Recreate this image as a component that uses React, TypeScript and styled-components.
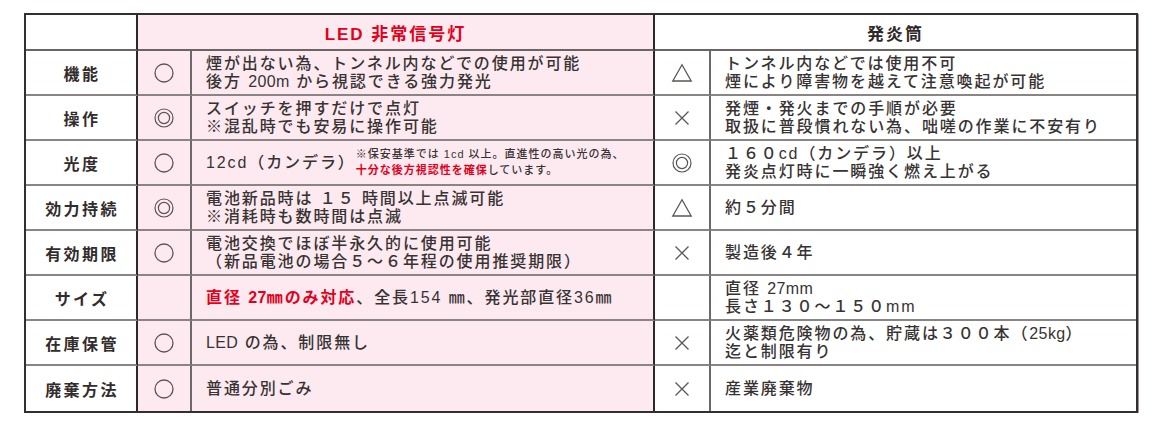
import React from "react";
import styled, { createGlobalStyle } from "styled-components";

const Global = createGlobalStyle`
  html, body { margin: 0; padding: 0; background: #ffffff; }
  body { font-family: "Liberation Sans", "Noto Sans CJK JP", sans-serif; color: #363131; }
`;

const Page = styled.div`
  padding: 13px 0 0 24px;
`;

const Table = styled.div`
  box-sizing: border-box;
  width: 1114px;
  display: grid;
  grid-template-columns: 112px 54px 463px 56px 425px;
  grid-template-rows: 36px repeat(8, 45px);
  border: 2px solid #352e2e;
  box-shadow: 1px 1px 0 #9a9494;
`;

const Cell = styled.div<{ $pink?: boolean; $right?: "dark" | "mid" | "none"; $last?: boolean; $span?: number }>`
  box-sizing: border-box;
  display: flex;
  align-items: center;
  min-width: 0;
  background: ${(p) => (p.$pink ? "#fde9f0" : "#ffffff")};
  border-right: ${(p) =>
    p.$right === "dark" ? "2px solid #2f2828" : p.$right === "mid" ? "2px solid #6e6868" : "none"};
  border-bottom: ${(p) => (p.$last ? "none" : "2px solid #8a8484")};
  grid-column: ${(p) => (p.$span ? `span ${p.$span}` : "auto")};
`;

const HeaderCell = styled(Cell)<{ $red?: boolean }>`
  justify-content: center;
  border-bottom: 2px solid #6a6464;
  font-size: 17px;
  font-weight: 700;
  letter-spacing: 2px;
  color: ${(p) => (p.$red ? "#e3001b" : "#2e2828")};
`;

const LabelCell = styled(Cell)`
  justify-content: center;
  font-size: 16px;
  font-weight: 700;
  letter-spacing: 2.4px;
  color: #322c2c;
  padding-left: 2px;
`;

const MarkCell = styled(Cell)`
  justify-content: center;
`;

const TextCell = styled(Cell)`
  padding-left: 14px;
  font-size: 16px;
  line-height: 18px;
  letter-spacing: 1.9px;
  font-weight: 500;
  color: #383333;
  white-space: nowrap;
`;

const Lines = styled.div`
  display: flex;
  flex-direction: column;
`;

const Red = styled.span`
  color: #e3001b;
  font-weight: 700;
`;

const Latin = styled.span`
  letter-spacing: 0.4px;
`;

const Note = styled.div`
  font-size: 11px;
  line-height: 16px;
  letter-spacing: 1px;
  padding-left: 12px;
  text-indent: -12px;
  margin-left: 0;
  margin-top: -2px;
  white-space: nowrap;
`;

const Inline = styled.div`
  display: flex;
  align-items: center;
`;

type Mark = "circle" | "double" | "triangle" | "cross" | "";

const MarkIcon: React.FC<{ kind: Mark }> = ({ kind }) => {
  if (!kind) return null;
  const stroke = "#5a5555";
  return (
    <svg width="22" height="22" viewBox="0 0 22 22" fill="none">
      {kind === "circle" && <circle cx="11" cy="11" r="9" stroke={stroke} strokeWidth="1.3" />}
      {kind === "double" && (
        <>
          <circle cx="11" cy="11" r="9" stroke={stroke} strokeWidth="1.2" />
          <circle cx="11" cy="11" r="5.6" stroke={stroke} strokeWidth="1.2" />
        </>
      )}
      {kind === "triangle" && (
        <path d="M11 2.8 L20.2 19 L1.8 19 Z" stroke={stroke} strokeWidth="1.3" strokeLinejoin="miter" />
      )}
      {kind === "cross" && (
        <path d="M4.5 4.5 L17.5 17.5 M17.5 4.5 L4.5 17.5" stroke={stroke} strokeWidth="1.3" />
      )}
    </svg>
  );
};

type Row = {
  label: string;
  ledMark: Mark;
  led: React.ReactNode;
  fireMark: Mark;
  fire: React.ReactNode;
};

const two = (a: React.ReactNode, b: React.ReactNode) => (
  <Lines>
    <span>{a}</span>
    <span>{b}</span>
  </Lines>
);

const rows: Row[] = [
  {
    label: "機能",
    ledMark: "circle",
    led: two(
      "煙が出ない為、トンネル内などでの使用が可能",
      <>
        後方 <Latin>200m</Latin> から視認できる強力発光
      </>
    ),
    fireMark: "triangle",
    fire: two("トンネル内などでは使用不可", "煙により障害物を越えて注意喚起が可能"),
  },
  {
    label: "操作",
    ledMark: "double",
    led: two("スイッチを押すだけで点灯", "※混乱時でも安易に操作可能"),
    fireMark: "cross",
    fire: two("発煙・発火までの手順が必要", "取扱に普段慣れない為、咄嗟の作業に不安有り"),
  },
  {
    label: "光度",
    ledMark: "circle",
    led: (
      <Inline>
        <span>12cd（カンデラ）</span>
        <Note>
          <div>※保安基準では 1cd 以上。直進性の高い光の為、</div>
          <div>
            <Red>十分な後方視認性を確保</Red>しています。
          </div>
        </Note>
      </Inline>
    ),
    fireMark: "double",
    fire: two("１６０cd（カンデラ）以上", "発炎点灯時に一瞬強く燃え上がる"),
  },
  {
    label: "効力持続",
    ledMark: "double",
    led: two("電池新品時は １５ 時間以上点滅可能", "※消耗時も数時間は点滅"),
    fireMark: "triangle",
    fire: <span>約５分間</span>,
  },
  {
    label: "有効期限",
    ledMark: "circle",
    led: two("電池交換でほぼ半永久的に使用可能", "（新品電池の場合５～６年程の使用推奨期限）"),
    fireMark: "cross",
    fire: <span>製造後４年</span>,
  },
  {
    label: "サイズ",
    ledMark: "",
    led: (
      <span>
        <Red>
          直径 <Latin>27</Latin>㎜のみ対応
        </Red>
        、全長154 ㎜、発光部直径36㎜
      </span>
    ),
    fireMark: "",
    fire: two(
      <>
        直径 <Latin>27mm</Latin>
      </>,
      "長さ１３０～１５０mm"
    ),
  },
  {
    label: "在庫保管",
    ledMark: "circle",
    led: (
      <span>
        <Latin>LED</Latin> の為、制限無し
      </span>
    ),
    fireMark: "cross",
    fire: two(
      <>
        火薬類危険物の為、貯蔵は３００本（<Latin>25kg</Latin>）
      </>,
      "迄と制限有り"
    ),
  },
  {
    label: "廃棄方法",
    ledMark: "circle",
    led: <span>普通分別ごみ</span>,
    fireMark: "cross",
    fire: <span>産業廃棄物</span>,
  },
];

export default function App() {
  return (
    <Page>
      <Global />
      <Table>
        <HeaderCell $right="dark" />
        <HeaderCell $pink $red $span={2} $right="dark">
          LED 非常信号灯
        </HeaderCell>
        <HeaderCell $span={2}>発炎筒</HeaderCell>
        {rows.map((r, i) => {
          const last = i === rows.length - 1;
          return (
            <React.Fragment key={r.label}>
              <LabelCell $right="dark" $last={last}>
                {r.label}
              </LabelCell>
              <MarkCell $pink $right="mid" $last={last}>
                <MarkIcon kind={r.ledMark} />
              </MarkCell>
              <TextCell $pink $right="dark" $last={last}>
                {r.led}
              </TextCell>
              <MarkCell $right="mid" $last={last}>
                <MarkIcon kind={r.fireMark} />
              </MarkCell>
              <TextCell $last={last}>{r.fire}</TextCell>
            </React.Fragment>
          );
        })}
      </Table>
    </Page>
  );
}
